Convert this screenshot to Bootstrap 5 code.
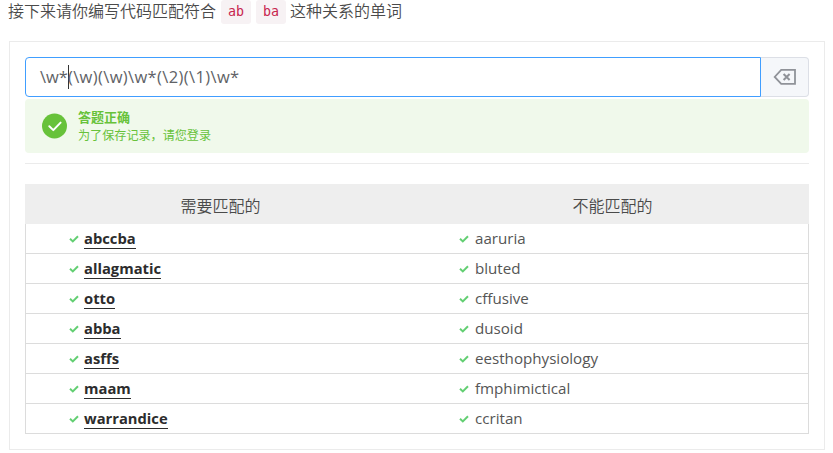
<!DOCTYPE html>
<html lang="zh-CN">
<head>
<meta charset="utf-8">
<meta name="viewport" content="width=device-width, initial-scale=1">
<title>正则练习</title>
<link href="https://cdn.jsdelivr.net/npm/bootstrap@5.3.0/dist/css/bootstrap.min.css" rel="stylesheet">
<style>
body{font-family:"Open Sans","Noto Sans CJK SC",sans-serif;font-size:15px;line-height:24px;color:#555;overflow:hidden}
.page{padding:0 8px 0 9px}
.intro{height:41px;font-size:16px}
.intro span,.words th{font-weight:350;color:#4a4a4a}
.words th{font-family:"Noto Sans CJK SC",sans-serif}
.intro span{line-height:22px;margin-left:-1px}
.intro code{font-family:"DejaVu Sans Mono",monospace;font-size:13.3px;line-height:24px;height:24px;width:30px;text-align:center;color:#c7254e;background:#f7f2f4;border-radius:3px;margin-left:5px}
.exercise{border:1px solid #ebebeb;height:409px;padding:15px}
.answer{height:40px}
.answer .form-control{border:1px solid #409eff;border-radius:4px 0 0 4px;color:#606266;font-size:16.5px;line-height:24px;padding:0 15px 0 14px}
.pattern{white-space:pre}
.caret{width:1px;height:24px;background:#333;margin-right:-1px}
.caret+.pattern{letter-spacing:.37px}
.answer .btn{width:48px;background:#f5f7fa;border:1px solid #dcdfe6;border-left:0;border-radius:0 4px 4px 0;margin:0!important}
.result{height:54px;margin-top:2px;border:0;border-radius:4px;background:#f0f9eb;color:#67c23a;padding:0 16px}
.result>div{margin-left:10px}
.result strong{font-size:13px;line-height:18px;margin-bottom:1px}
.result span{font-size:12.1px;line-height:18px}
.divider{border-top:1px solid #ebebeb;margin-top:10px;margin-bottom:20px}
.words{table-layout:fixed;border-collapse:separate;border-spacing:0;color:inherit}
.words th{height:40px;background:#eee;font-size:16px;padding:1px 1px 0 0;text-align:center}
.words td{height:30px;border-bottom:1px solid #dcdcdc;padding:0 0 0 43px;line-height:20px}
.words td:first-child{border-left:1px solid #dcdcdc}
.words td:last-child{border-right:1px solid #dcdcdc;padding-left:42px}
.words td svg{margin-right:6px}
.words td:first-child svg{margin-right:5px}
.miss{padding-bottom:2px;font-size:15.15px}
.hit{color:#2c2c2c;font-weight:700;border-bottom:1px solid #2c2c2c;line-height:19px;font-size:14.75px}
</style>
</head>
<body>
<svg class="d-none"><symbol id="tick" viewBox="0 0 10 8"><path d="M1 3.8 3.8 6.4 9 1.3" fill="none" stroke="#63cf73" stroke-width="2"/></symbol></svg>
<main class="page">
<div class="intro d-flex align-items-start"><span>接下来请你编写代码匹配符合</span><code>ab</code><code>ba</code><span class="ms-1">这种关系的单词</span></div>
<section class="exercise">
<div class="input-group answer flex-nowrap">
<div class="form-control d-flex align-items-center" role="textbox"><span class="pattern">\w*</span><i class="caret"></i><span class="pattern">(\w)(\w)\w*(\2)(\1)\w*</span></div>
<button class="btn d-flex align-items-center justify-content-center p-0" type="button" aria-label="清除"><svg width="24" height="18" viewBox="0 0 24 18" fill="none" stroke="#909399" stroke-width="1.8"><path d="M8.2 1.9H22v14H8.2L1.7 8.9Z"/><path d="m10.6 6 6 6m0-6-6 6" stroke-width="2"/></svg></button>
</div>
<div class="alert result d-flex align-items-center mb-0"><svg width="27" height="27" viewBox="0 0 27 27"><circle cx="13.5" cy="13" r="12.5" fill="#67c23a"/><path d="m8.3 13.3 4 3.8 7.3-7.5" fill="none" stroke="#fff" stroke-width="2" stroke-linecap="round" stroke-linejoin="round"/></svg><div class="d-flex flex-column"><strong>答题正确</strong><span>为了保存记录，请您登录</span></div></div>
<div class="divider"></div>
<table class="words w-100">
<thead><tr><th>需要匹配的</th><th>不能匹配的</th></tr></thead>
<tbody>
<tr><td><div class="d-flex align-items-center"><svg width="10" height="8"><use href="#tick"/></svg><span class="hit">abccba</span></div></td><td><div class="d-flex align-items-center"><svg width="10" height="8"><use href="#tick"/></svg><span class="miss">aaruria</span></div></td></tr>
<tr><td><div class="d-flex align-items-center"><svg width="10" height="8"><use href="#tick"/></svg><span class="hit">allagmatic</span></div></td><td><div class="d-flex align-items-center"><svg width="10" height="8"><use href="#tick"/></svg><span class="miss">bluted</span></div></td></tr>
<tr><td><div class="d-flex align-items-center"><svg width="10" height="8"><use href="#tick"/></svg><span class="hit">otto</span></div></td><td><div class="d-flex align-items-center"><svg width="10" height="8"><use href="#tick"/></svg><span class="miss">cffusive</span></div></td></tr>
<tr><td><div class="d-flex align-items-center"><svg width="10" height="8"><use href="#tick"/></svg><span class="hit">abba</span></div></td><td><div class="d-flex align-items-center"><svg width="10" height="8"><use href="#tick"/></svg><span class="miss">dusoid</span></div></td></tr>
<tr><td><div class="d-flex align-items-center"><svg width="10" height="8"><use href="#tick"/></svg><span class="hit">asffs</span></div></td><td><div class="d-flex align-items-center"><svg width="10" height="8"><use href="#tick"/></svg><span class="miss">eesthophysiology</span></div></td></tr>
<tr><td><div class="d-flex align-items-center"><svg width="10" height="8"><use href="#tick"/></svg><span class="hit">maam</span></div></td><td><div class="d-flex align-items-center"><svg width="10" height="8"><use href="#tick"/></svg><span class="miss">fmphimictical</span></div></td></tr>
<tr><td><div class="d-flex align-items-center"><svg width="10" height="8"><use href="#tick"/></svg><span class="hit">warrandice</span></div></td><td><div class="d-flex align-items-center"><svg width="10" height="8"><use href="#tick"/></svg><span class="miss">ccritan</span></div></td></tr>
</tbody>
</table>
</section>
</main>
<script src="https://cdn.jsdelivr.net/npm/bootstrap@5.3.0/dist/js/bootstrap.bundle.min.js"></script>
</body>
</html>
